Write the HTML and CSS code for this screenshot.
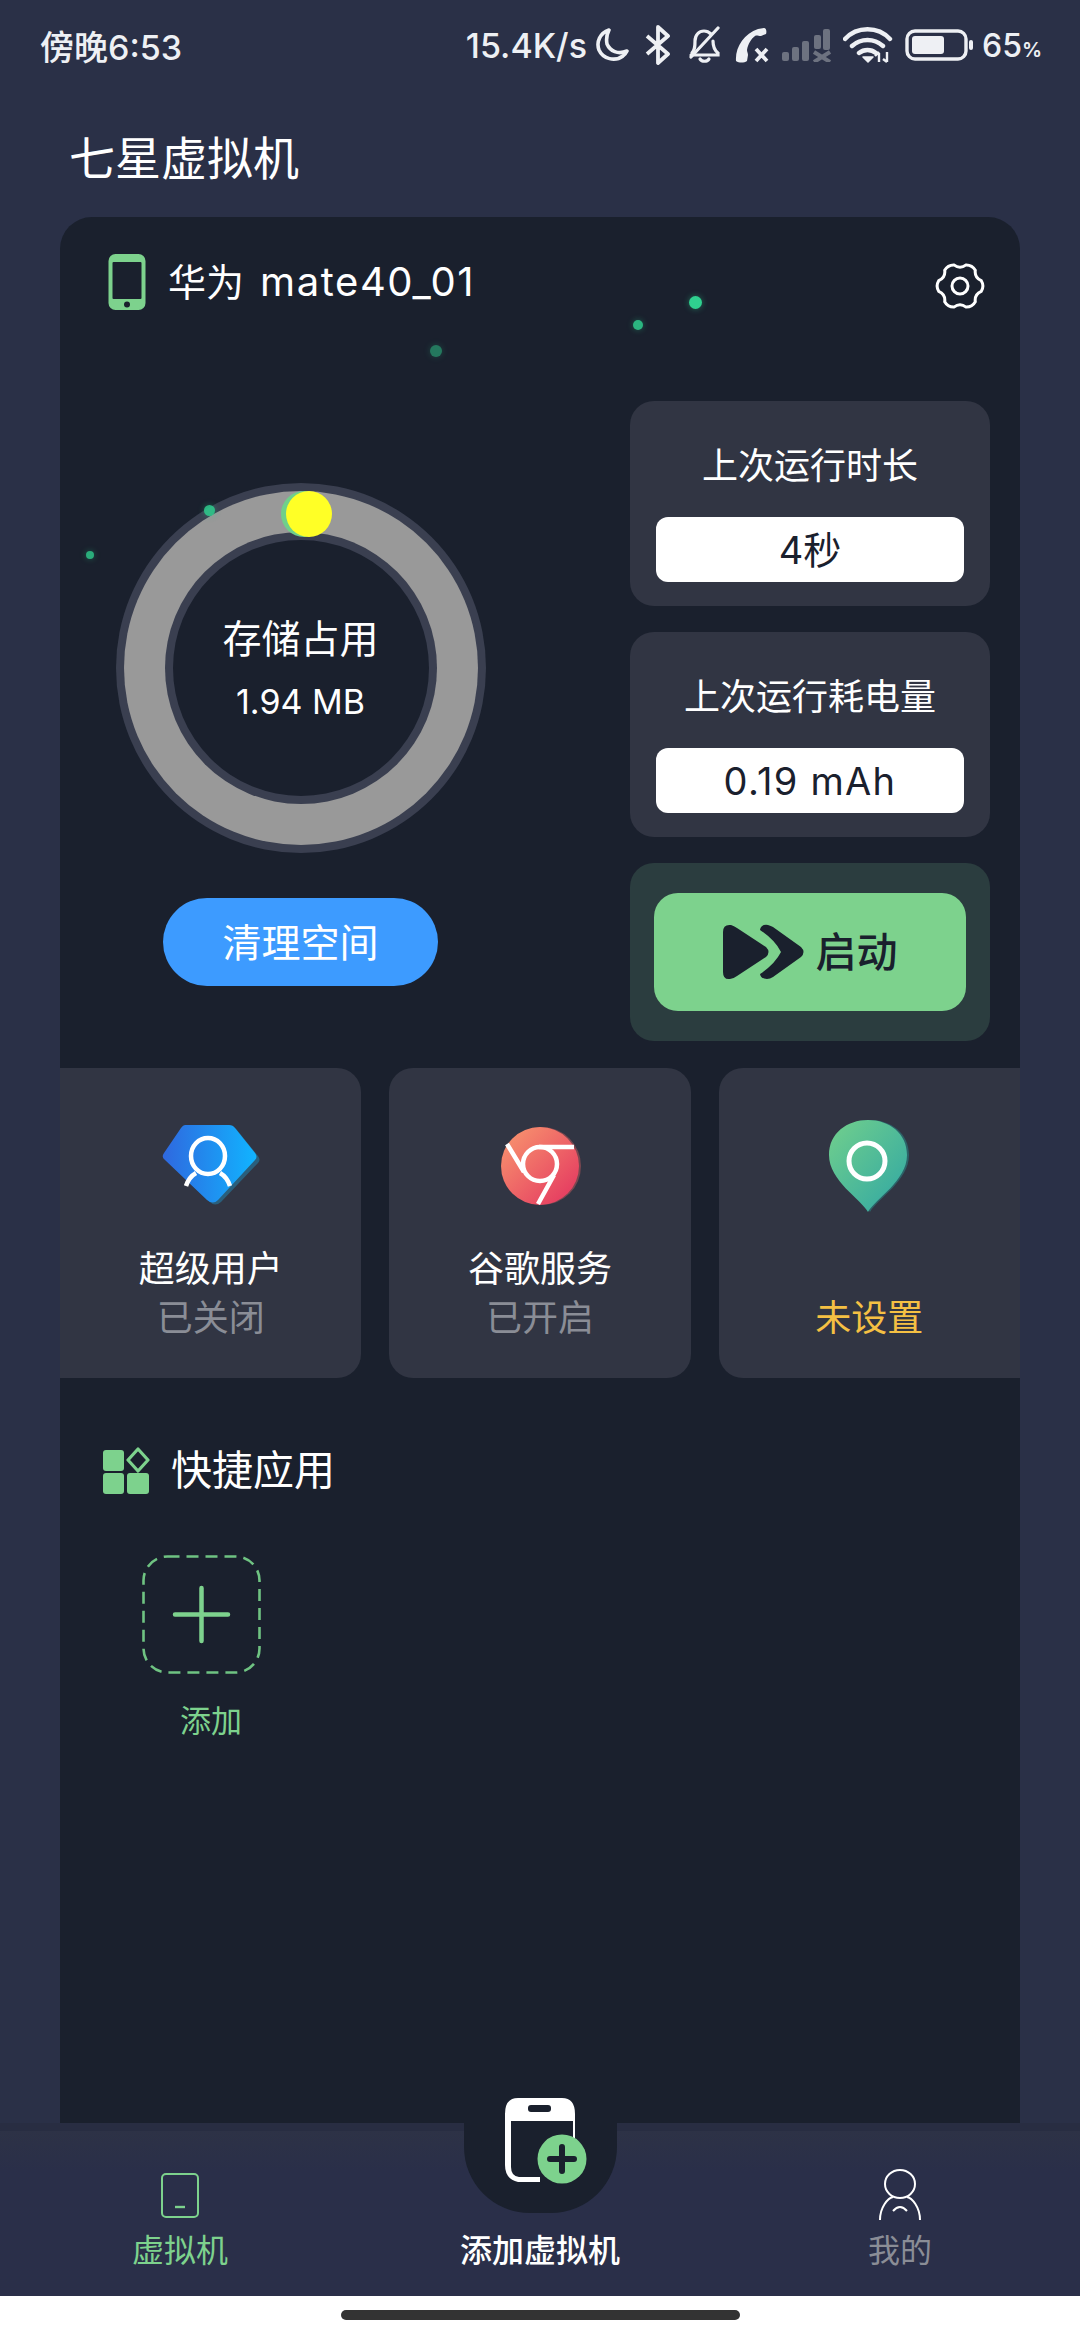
FILE: index.html
```html
<!DOCTYPE html>
<html lang="zh">
<head>
<meta charset="utf-8">
<title>七星虚拟机</title>
<link rel="stylesheet" href="styles.css">
</head>
<body>
<div class="app">
  <header class="status">
    <div class="time">傍晚6:53</div>
    <div class="status-right">
      <span class="speed">15.4K/s</span>
      <svg class="si" width="38" height="36" viewBox="0 0 38 36"><path d="M14 3C5 6 1 15 4 23c4 9 16 12 24 6 2-1 3-3 4-5-9 4-17 0-20-7-1-5 0-10 2-14z" fill="none" stroke="#eef0f4" stroke-width="3.600" stroke-linejoin="round"/></svg>
      <svg class="si" width="30" height="40" viewBox="0 0 30 40"><path d="M2 11l21 18-10 9V2l10 9L2 29" fill="none" stroke="#eef0f4" stroke-width="3.800" stroke-linejoin="round"/></svg>
      <svg class="si" width="36" height="38" viewBox="0 0 36 38"><path d="M5 27c3-3 3-7 3-12 0-6 4-10 9-10 3 0 5 1 7 3M26 15c0 6 1 9 5 12v2H4M13 33c2 3 7 3 9 0" fill="none" stroke="#eef0f4" stroke-width="3.200" stroke-linecap="round"/><path d="M4 31L31 2" stroke="#eef0f4" stroke-width="3.200" stroke-linecap="round"/></svg>
      <svg class="si" width="35" height="36" viewBox="0 0 35 36"><path d="M1 34C0 20 9 7 23 2l6-1c2 0 3 3 2 6l-5 2c-3 0-4-1-6 0-4 3-7 8-8 14 0 2 1 3 1 5l-1 6c-3 2-8 2-11 0z" fill="#eef0f4"/><path d="M21 22l11 12M32 22L21 34" stroke="#eef0f4" stroke-width="3.800"/></svg>
      <svg class="si" width="49" height="34" viewBox="0 0 49 34"><g fill="#6d7280"><rect x="0" y="24" width="7" height="9" rx="2"/><rect x="10" y="19" width="7" height="14" rx="2"/><rect x="20" y="13" width="7" height="20" rx="2"/><rect x="32" y="7" width="7" height="14" rx="2"/><rect x="41" y="1" width="7" height="21" rx="2"/></g><path d="M32 24l16 10M48 24L32 34" stroke="#6d7280" stroke-width="4"/></svg>
      <svg class="si" width="50" height="36" viewBox="0 0 50 36"><path d="M2 12C14-1 35-1 47 12M9 19c9-8 22-8 31 0M16 26c5-4 12-4 17 0" fill="none" stroke="#eef0f4" stroke-width="4.400" stroke-linecap="round"/><path d="M20 30h10l-5 5z" fill="#eef0f4" stroke="#eef0f4" stroke-width="1.500" stroke-linejoin="round"/><path d="M36 35V26M32 29l4-4M44 25v10M40 32l4 3" fill="none" stroke="#eef0f4" stroke-width="2.400"/></svg>
      <svg class="si si-batt" width="68" height="32" viewBox="0 0 68 32"><rect x="2" y="2" width="59" height="28" rx="8" fill="none" stroke="#eef0f4" stroke-width="3.400"/><rect x="7" y="7" width="32" height="18" rx="3" fill="#eef0f4"/><rect x="64" y="11" width="4" height="10" rx="2" fill="#eef0f4"/></svg>
      <span class="battery">65<small>%</small></span>
    </div>
  </header>

  <h1 class="title">七星虚拟机</h1>

  <main class="card">
    <div class="card-head">
      <div class="device">
        <svg width="38" height="56" viewBox="0 0 38 56"><rect x="0.500" width="37" height="56" rx="7" fill="#7dd28d"/><rect x="4.500" y="8" width="29" height="37" rx="1" fill="#1a202d"/><circle cx="19" cy="50.500" r="3" fill="#1a202d"/></svg>
        <span class="device-name">华为<span class="latin">mate40_01</span></span>
      </div>
      <svg class="gear" width="50" height="50" viewBox="-25 -25 50 50"><path d="M21.300 -5.300Q24.500 0 21.300 5.300Q14.300 8.250 15.300 15.800Q12.250 21.200 6.100 21.100Q0 16.500 -6.100 21.100Q-12.250 21.200 -15.300 15.800Q-14.300 8.250 -21.300 5.300Q-24.500 0 -21.300 -5.300Q-14.300 -8.250 -15.300 -15.800Q-12.250 -21.200 -6.100 -21.100Q0 -16.500 6.100 -21.100Q12.250 -21.200 15.300 -15.800Q14.300 -8.250 21.300 -5.300Z" fill="none" stroke="#fff" stroke-width="3"/><circle r="8" fill="none" stroke="#fff" stroke-width="3"/></svg>
    </div>

    <section class="overview">
      <div class="storage">
        <div class="ring">
          <div class="ring-gray">
            <div class="ring-mid">
              <div class="ring-hole">
                <div class="ring-label">存储占用</div>
                <div class="ring-value">1.94 MB</div>
              </div>
            </div>
          </div>
          <span class="knob knob-green"></span>
          <span class="knob knob-yellow"></span>
        </div>
        <div class="clean">清理空间</div>
      </div>

      <div class="stats">
        <div class="stat">
          <div class="stat-label">上次运行时长</div>
          <div class="stat-value">4秒</div>
        </div>
        <div class="stat">
          <div class="stat-label">上次运行耗电量</div>
          <div class="stat-value stat-value-wide">0.19 mAh</div>
        </div>
        <div class="start-wrap">
          <div class="start">
            <svg width="82" height="56" viewBox="0 0 82 56"><path d="M0 8Q0 0 8 1Q11 2 14 4L43 23Q48 28 43 33L14 52Q10 55 7 55Q0 56 0 48Z" fill="#1a202d"/><path d="M37 6Q38 0 45 1Q48 2 50 3L78 23Q83 28 78 33L50 53Q47 55 44 55Q38 55 37 50Q52 40 58 28Q52 16 37 6Z" fill="#1a202d"/></svg>
            <span>启动</span>
          </div>
        </div>
      </div>
    </section>

    <section class="features">
      <div class="feature feature-first">
        <svg class="feature-icon" width="100" height="100" viewBox="0 0 100 100">
          <defs>
            <linearGradient id="gb" x1="0" x2="1" y1="0" y2="0"><stop offset="0" stop-color="#2f68df"/><stop offset="1" stop-color="#11b4ff"/></linearGradient>
            <linearGradient id="gr" x1="0" x2="1" y1="0" y2="1"><stop offset="0" stop-color="#f99a6f"/><stop offset="1" stop-color="#e3315f"/></linearGradient>
            <linearGradient id="gp" x1="0" x2="1" y1="0" y2="1"><stop offset="0" stop-color="#72d08c"/><stop offset="1" stop-color="#2fa6a4"/></linearGradient>
          </defs>
          <path d="M26 12H70Q74 12 76 15L97 41Q100 45 97 48L60 87Q54 92 49 87L9 48Q6 45 9 41L22 15Q24 12 26 12Z" fill="#2a5f7c"/>
          <path d="M24 10H68Q72 10 74 13L94 38Q97 42 94 45L57 85Q52 90 46 85L4 45Q0 42 3 38L20 13Q22 10 24 10Z" fill="url(#gb)"/>
          <ellipse cx="47" cy="41" rx="17" ry="18" fill="none" stroke="#fff" stroke-width="4.500"/>
          <path d="M25 71Q28 62 35 58M69 71Q66 62 59 58" fill="none" stroke="#fff" stroke-width="4.500"/>
        </svg>
        <div class="feature-name">超级用户</div>
        <div class="feature-state">已关闭</div>
      </div>
      <div class="feature">
        <svg class="feature-icon" width="100" height="100" viewBox="0 0 100 100">
          <circle cx="52" cy="51" r="39" fill="#7a4750"/>
          <circle cx="50" cy="51" r="39" fill="url(#gr)"/>
          <circle cx="50" cy="49" r="17" fill="none" stroke="#fff" stroke-width="4.500"/>
          <path d="M17 29L34 57M49 32H84M64 60L48 89" fill="none" stroke="#fff" stroke-width="4.500"/>
        </svg>
        <div class="feature-name">谷歌服务</div>
        <div class="feature-state">已开启</div>
      </div>
      <div class="feature feature-last">
        <svg class="feature-icon" width="100" height="100" viewBox="0 0 100 100">
          <path d="M51 97C44 84 13 66 13 40C13 18 30 5 51 5S90 18 90 40C90 66 58 84 51 97Z" fill="#2c6268"/>
          <path d="M49 97C42 84 10 66 10 40C10 18 28 5 49 5S88 18 88 40C88 66 56 84 49 97Z" fill="url(#gp)"/>
          <circle cx="48" cy="46" r="18" fill="none" stroke="#fff" stroke-width="5"/>
        </svg>
        <div class="feature-name"></div>
        <div class="feature-state feature-warn">未设置</div>
      </div>
    </section>

    <section class="quick">
      <div class="quick-head">
        <svg width="47" height="47" viewBox="0 0 47 47"><g fill="#7dd28d"><rect width="21" height="21" y="3" rx="3"/><rect width="21" height="21" y="26" rx="3"/><rect x="24" y="26" width="22" height="21" rx="3"/></g><path d="M35 2L45 13L35 24L25 13Z" fill="none" stroke="#7dd28d" stroke-width="3.200" stroke-linejoin="round"/></svg>
        <span>快捷应用</span>
      </div>
      <svg class="add-box" width="119" height="119" viewBox="0 0 119 119"><rect x="1.500" y="1.500" width="116" height="116" rx="24" fill="none" stroke="#6fc382" stroke-width="2.600" stroke-dasharray="12 7"/><path d="M59.500 33V86M33 59.500H86" stroke="#7dd28d" stroke-width="4.500" stroke-linecap="round"/></svg>
      <div class="add-label">添加</div>
    </section>

    <span class="dot d1"></span>
    <span class="dot d2"></span>
    <span class="dot d3"></span>
    <span class="dot d4"></span>
    <span class="dot d5"></span>
  </main>

  <nav class="nav">
    <div class="nav-item nav-on">
      <svg width="38" height="52" viewBox="0 0 38 52"><rect x="1" y="5" width="36" height="43" rx="4" fill="none" stroke="#7dd28d" stroke-width="2"/><path d="M14 38h10" stroke="#7dd28d" stroke-width="2.400"/></svg>
      <div class="nav-label">虚拟机</div>
    </div>
    <div class="nav-item nav-add">
      <div class="bump">
        <svg class="bump-icon" width="84" height="88" viewBox="0 0 84 88">
          <path d="M1 17V68Q1 82 14 85H36V80H15Q7 79 7 70V24H69V42H71V17Q71 1 58 1H14Q1 1 1 17Z" fill="#fff"/>
          <rect x="24" y="8" width="23" height="7" rx="3" fill="#1a202d"/>
          <circle cx="58" cy="62" r="24.500" fill="#7dd28d"/>
          <path d="M58 50V74M46 62H70" stroke="#1a202d" stroke-width="6" stroke-linecap="round"/>
        </svg>
      </div>
      <div class="nav-label nav-label-strong">添加虚拟机</div>
    </div>
    <div class="nav-item nav-off">
      <svg width="44" height="52" viewBox="0 0 44 52"><ellipse cx="22" cy="15" rx="15" ry="14" fill="none" stroke="#fff" stroke-width="2"/><path d="M2 51C2 38 10 29 15 28M42 51C42 38 34 29 29 28M15 42Q22 34 29 42" fill="none" stroke="#fff" stroke-width="2"/></svg>
      <div class="nav-label">我的</div>
    </div>
  </nav>

  <div class="home"><span class="home-bar"></span></div>
</div>
</body>
</html>
```

FILE: styles.css
```css
* { box-sizing: border-box; }
html, body { margin: 0; padding: 0; }
body {
  width: 1080px;
  height: 2340px;
  overflow: hidden;
  background: #fff;
  font-family: Inter, "Noto Sans CJK SC", sans-serif;
  color: #fff;
}
.app { display: flex; flex-direction: column; width: 1080px; height: 2340px; background: #2a3047; }

.status { display: flex; justify-content: space-between; align-items: center; height: 90px; padding: 0 40px; color: #eef0f4; font-size: 34px; font-weight: 500; }
.status-right { display: flex; align-items: center; gap: 12px; }
.si { display: block; flex: none; }
.si-batt { margin-right: -3px; }
.speed { margin-right: -4px; }
.battery { width: 58px; font-size: 32px; white-space: nowrap; }
.battery small { font-size: 20px; font-weight: 600; }

.title { margin: 0; height: 127px; padding-left: 69px; font-size: 46px; font-weight: 400; line-height: 136px; }

.card { position: relative; flex: none; height: 1906px; margin: 0 60px; background: #1a202d; border-radius: 32px 32px 0 0; overflow: hidden; }
.card-head { display: flex; justify-content: space-between; align-items: center; height: 56px; margin-top: 37px; padding: 0 35px 0 48px; }
.device { display: flex; align-items: center; gap: 22px; }
.device svg { display: block; }
.device-name { font-size: 38px; line-height: 56px; }
.latin { margin-left: 16px; letter-spacing: 1.600px; font-size: 40px; }
.gear { display: block; margin-top: 8px; }

.overview { display: flex; justify-content: space-between; margin-top: 91px; padding-right: 30px; }
.storage { display: flex; flex-direction: column; align-items: center; width: 481px; padding-top: 82px; }
.ring { position: relative; display: flex; align-items: center; justify-content: center; width: 370px; height: 370px; border-radius: 50%; background: #3a3f50; }
.ring-gray { display: flex; align-items: center; justify-content: center; width: 354px; height: 354px; border-radius: 50%; background: #999; }
.ring-mid { display: flex; align-items: center; justify-content: center; width: 272px; height: 272px; border-radius: 50%; background: #3a3f50; }
.ring-hole { display: flex; flex-direction: column; align-items: center; justify-content: center; width: 256px; height: 256px; padding-top: 3px; border-radius: 50%; background: #1a202d; }
.ring-label { font-size: 39px; line-height: 63px; }
.ring-value { font-size: 34px; line-height: 63px; }
.knob { position: absolute; top: 8px; width: 46px; height: 46px; border-radius: 50%; }
.knob-green { left: 165px; background: #6fd08a; }
.knob-yellow { left: 170px; background: #ffff26; }
.clean { width: 275px; height: 88px; margin-top: 45px; border-radius: 44px; background: #3d9bff; font-size: 39px; line-height: 89px; text-align: center; }

.stats { display: flex; flex-direction: column; gap: 26px; width: 360px; }
.stat { display: flex; flex-direction: column; align-items: center; height: 205px; padding-top: 36px; border-radius: 24px; background: #313543; }
.stat-label { height: 80px; font-size: 36px; line-height: 59px; }
.stat-value { width: 308px; height: 65px; border-radius: 12px; background: #fff; color: #1a202d; font-size: 38px; line-height: 66px; text-align: center; }
.stat-value-wide { letter-spacing: 1.300px; }
.start-wrap { display: flex; align-items: center; justify-content: center; height: 178px; border-radius: 24px; background: #2b3d3f; }
.start { display: flex; align-items: center; justify-content: center; gap: 11px; width: 312px; height: 118px; border-radius: 24px; background: #7dd28d; color: #1a202d; font-size: 41px; font-weight: 500; }
.start span { line-height: 56px; }

.features { display: flex; gap: 28px; margin-top: 27px; }
.feature { display: flex; flex-direction: column; align-items: center; flex: 1; height: 310px; padding-top: 47px; border-radius: 24px; background: #313543; }
.feature-first { border-radius: 0 24px 24px 0; }
.feature-last { border-radius: 24px 0 0 24px; }
.feature-icon { display: block; flex: none; }
.feature-name { height: 50px; margin-top: 29px; font-size: 36px; line-height: 50px; }
.feature-state { height: 48px; color: #8a8d96; font-size: 36px; line-height: 48px; }
.feature-warn { color: #f5c043; }

.quick { display: flex; flex-direction: column; }
.quick-head { display: flex; align-items: center; gap: 21px; margin-top: 69px; padding-left: 43px; font-size: 41px; line-height: 47px; }
.quick-head svg { display: block; }
.add-box { display: block; margin: 61px 0 0 82px; }
.add-label { margin: 26px 0 0 120px; color: #7dd28d; font-size: 31px; line-height: 42px; }

.dot { position: absolute; border-radius: 50%; background: #2fd08f; box-shadow: 0 0 6px rgba(47, 208, 143, .45); }
.d1 { left: 629px; top: 79px; width: 13px; height: 13px; }
.d2 { left: 573px; top: 103px; width: 10px; height: 10px; opacity: .85; }
.d3 { left: 370px; top: 128px; width: 12px; height: 12px; opacity: .5; }
.d4 { left: 144px; top: 288px; width: 11px; height: 11px; opacity: .85; }
.d5 { left: 26px; top: 334px; width: 8px; height: 8px; opacity: .8; }

.nav { display: grid; grid-template-columns: repeat(3, 1fr); flex: none; height: 173px; border-top: 8px solid #282d42; background: linear-gradient(#2d3246, #2a2f49 40px); }
.nav-item { display: flex; flex-direction: column; align-items: center; padding-top: 38px; }
.nav-item svg { display: block; }
.nav-label { margin-top: 10px; font-size: 32px; line-height: 40px; }
.nav-on .nav-label { color: #7dd28d; }
.nav-off { color: #8a8d96; }
.nav-add { padding-top: 0; }
.bump { position: relative; flex: none; width: 153px; height: 90px; margin-top: -8px; border-radius: 0 0 66px 66px; background: #1a202d; }
.bump .bump-icon { position: absolute; left: 40px; top: -26px; }
.nav-label-strong { margin-top: 18px; font-weight: 500; }

.home { display: flex; align-items: flex-start; justify-content: center; flex: none; height: 44px; padding-top: 14px; background: #fff; }
.home-bar { width: 399px; height: 10px; border-radius: 5px; background: #333; }
```
